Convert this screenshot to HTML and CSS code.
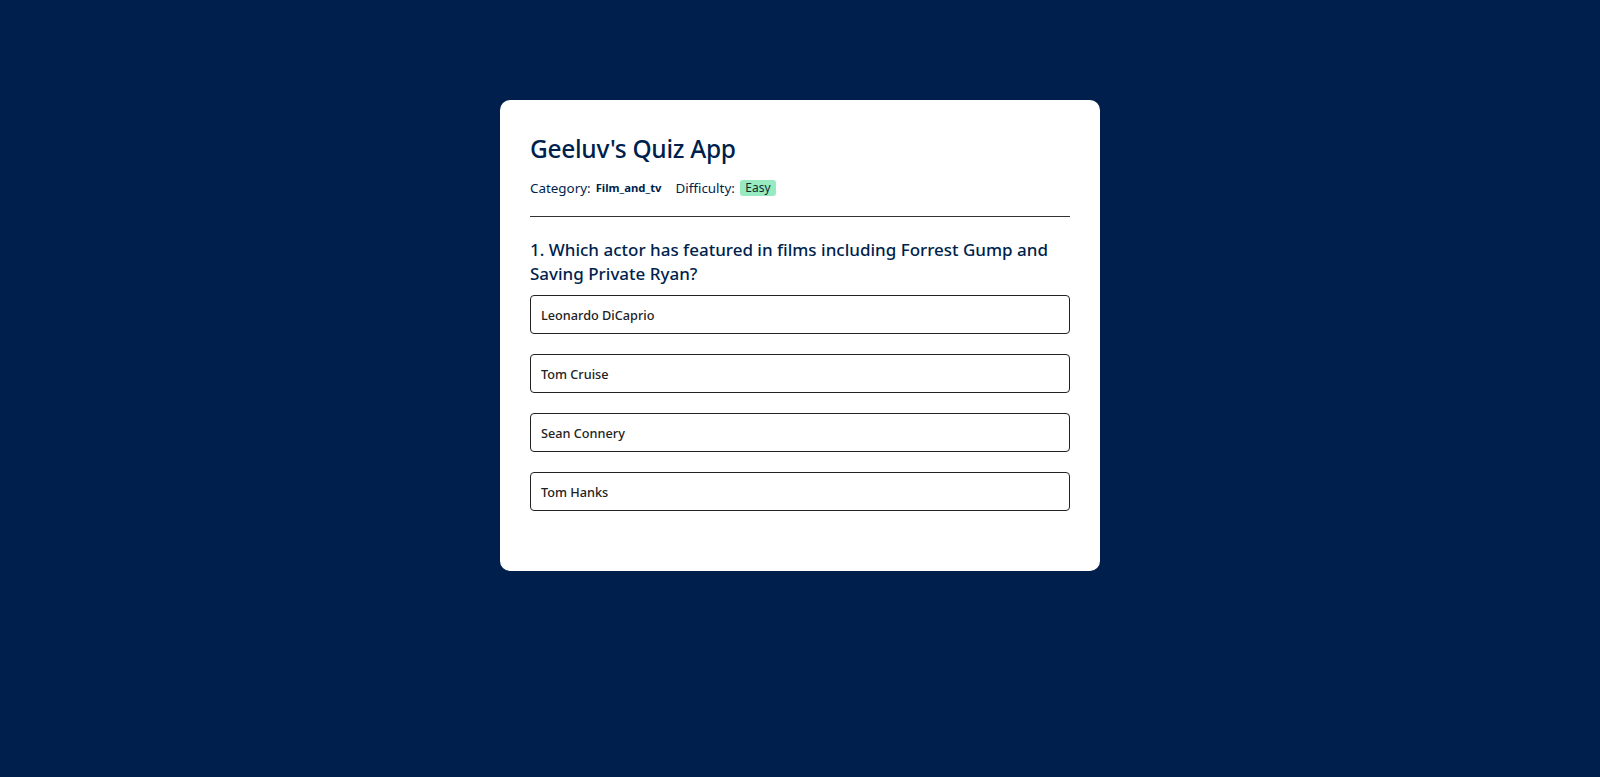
FILE: index.html
```html
<!DOCTYPE html>
<html lang="en">
<head>
<meta charset="utf-8">
<title>Geeluv's Quiz App</title>
<link rel="stylesheet" href="styles.css">
</head>
<body>
<main class="card">
  <h1 class="title">Geeluv's Quiz App</h1>
  <div class="meta">
    <span class="meta-item">Category: <strong class="category">Film_and_tv</strong></span>
    <span class="meta-item">Difficulty: <span class="badge">Easy</span></span>
  </div>
  <hr class="divider">
  <h2 class="question">1. Which actor has featured in films including Forrest Gump and Saving Private Ryan?</h2>
  <div class="options">
    <button class="option">Leonardo DiCaprio</button>
    <button class="option">Tom Cruise</button>
    <button class="option">Sean Connery</button>
    <button class="option">Tom Hanks</button>
  </div>
</main>
</body>
</html>
```

FILE: styles.css
```css
html, body {
  margin: 0;
  padding: 0;
}
body {
  background: #001f4d;
  font-family: "Noto Sans", "Open Sans", sans-serif;
  color: #001f4d;
  min-height: 777px;
  padding-top: 100px;
  box-sizing: border-box;
}
.card {
  width: 600px;
  box-sizing: border-box;
  margin: 0 auto;
  background: #ffffff;
  border-radius: 10px;
  padding: 30px 30px 60px;
}
.title {
  margin: 0;
  font-size: 24.5px;
  font-weight: 500;
  line-height: 38px;
  letter-spacing: -0.3px;
}
.meta {
  display: flex;
  align-items: center;
  gap: 14px;
  margin-top: 10.5px;
  font-size: 13.4px;
  line-height: 18px;
}
.meta-item {
  display: flex;
  align-items: center;
  gap: 5px;
}
.category {
  font-size: 11.3px;
  font-weight: 700;
}
.badge {
  background: #98eac0;
  border-radius: 3px;
  padding: 0 5.5px;
  font-size: 12px;
  line-height: 16px;
  color: #0c2a30;
}
.divider {
  margin: 19.5px 0 0;
  border: 0;
  border-top: 1px solid #333333;
}
.question {
  margin: 20.5px 0 0;
  font-size: 17px;
  font-weight: 500;
  line-height: 24px;
}
.options {
  display: flex;
  flex-direction: column;
  gap: 20.5px;
  margin-top: 9.5px;
}
.option {
  display: block;
  width: 100%;
  height: 38.5px;
  box-sizing: border-box;
  text-align: left;
  background: #ffffff;
  border: 1px solid #222222;
  border-radius: 4px;
  padding: 1px 10px 0;
  font-family: inherit;
  font-size: 12.7px;
  font-weight: 500;
  color: #222222;
  cursor: pointer;
}
```
